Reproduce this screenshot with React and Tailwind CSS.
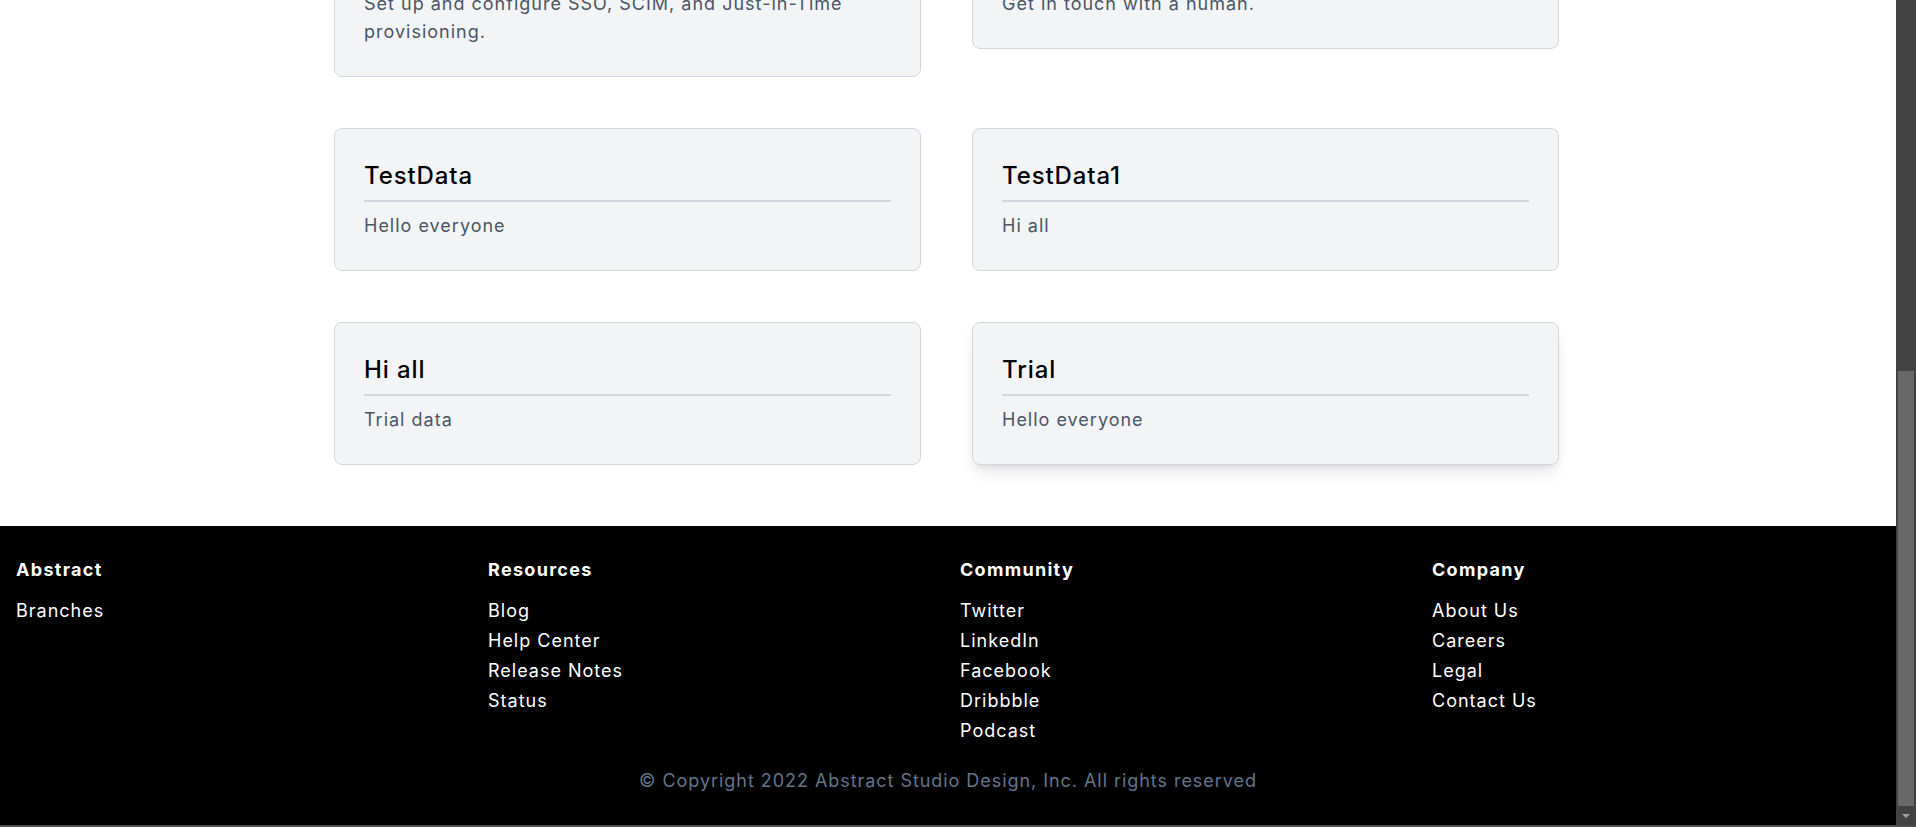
import React from "react";

const cards = [
  { title: "Single Sign-On", body: "Set up and configure SSO, SCIM, and Just-in-Time provisioning." },
  { title: "Contact Support", body: "Get in touch with a human." },
  { title: "TestData", body: "Hello everyone" },
  { title: "TestData1", body: "Hi all" },
  { title: "Hi all", body: "Trial data" },
  { title: "Trial", body: "Hello everyone", active: true },
];

const columns = [
  { title: "Abstract", links: ["Branches"] },
  { title: "Resources", links: ["Blog", "Help Center", "Release Notes", "Status"] },
  { title: "Community", links: ["Twitter", "LinkedIn", "Facebook", "Dribbble", "Podcast"] },
  { title: "Company", links: ["About Us", "Careers", "Legal", "Contact Us"] },
];

function Card({ title, body, active }) {
  return (
    <div
      className={
        "rounded-lg border border-gray-300 bg-[#f3f4f6] px-[29px] pt-[31px] pb-[30px] " +
        (active ? "shadow-lg" : "")
      }
    >
      <h2 className="border-b-2 border-gray-300 pb-2 text-2xl leading-8 font-medium tracking-[0.9px] text-black">
        {title}
      </h2>
      <p className="mt-[10px] text-lg leading-7 tracking-[1px] text-gray-600">{body}</p>
    </div>
  );
}

export default function App() {
  return (
    <div className="flex h-[827px] w-full flex-col overflow-hidden bg-white font-[Inter,sans-serif]">
      <div className="flex min-h-0 flex-1">
        <main className="flex min-w-0 flex-1 flex-col overflow-hidden">
          <section className="-mt-[94px] pb-[61px]">
            <div className="ml-[334px] grid w-[1225px] grid-cols-2 items-start gap-x-[51px] gap-y-[51px]">
              {cards.map((c) => (
                <Card key={c.title} {...c} />
              ))}
            </div>
          </section>
          <footer className="flex-1 bg-black px-4 pt-[30px] text-white">
            <div className="grid grid-cols-4 gap-6">
              {columns.map((col) => (
                <div key={col.title}>
                  <h3 className="mb-[12px] text-lg leading-7 font-bold tracking-[1.3px]">{col.title}</h3>
                  <ul>
                    {col.links.map((l) => (
                      <li key={l} className="text-lg leading-[30px] tracking-[1px]">
                        {l}
                      </li>
                    ))}
                  </ul>
                </div>
              ))}
            </div>
            <p className="mt-[21px] text-center text-lg leading-7 tracking-[0.95px] text-[#64748b]">
              © Copyright 2022 Abstract Studio Design, Inc. All rights reserved
            </p>
          </footer>
        </main>
        <div className="flex w-[20px] flex-col bg-[#424242] pt-[371px]">
          <div className="mx-[2px] h-[435px] bg-[#686868]" />
          <div className="flex flex-1 items-center justify-center">
            <div className="h-0 w-0 border-x-[4px] border-t-[4px] border-x-transparent border-t-[#a3a3a3]" />
          </div>
        </div>
      </div>
      <div className="h-[2px] bg-[#4a4a4a]" />
    </div>
  );
}
